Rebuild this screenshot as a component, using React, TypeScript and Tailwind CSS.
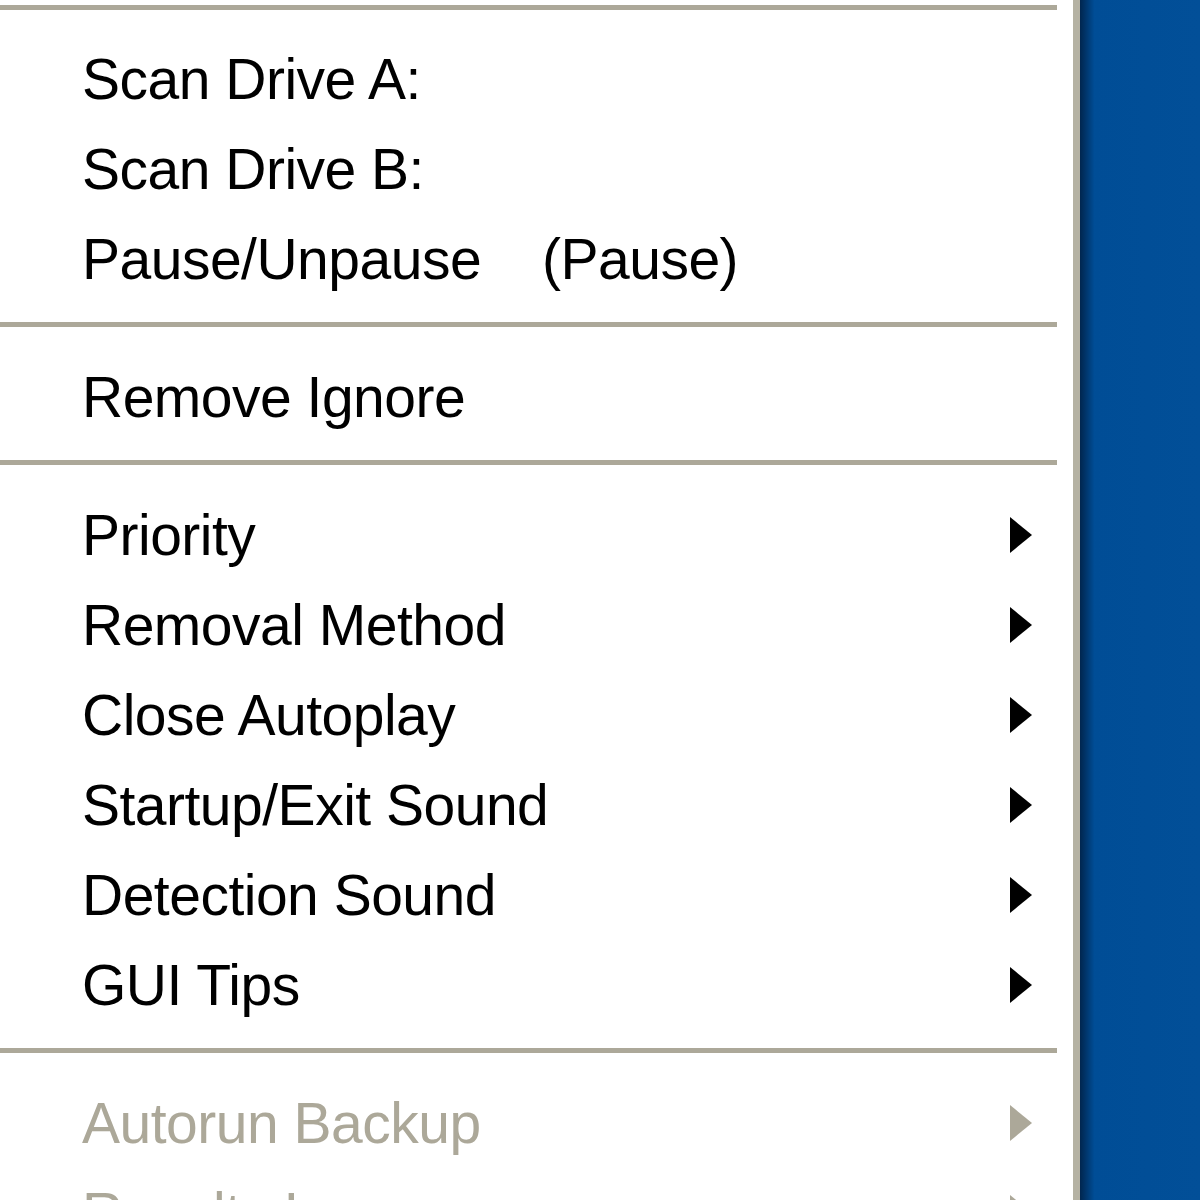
type Item =
  | { kind: 'sep' }
  | { kind: 'item'; label: string; accel?: string; sub?: boolean; disabled?: boolean }

const items: Item[] = [
  { kind: 'item', label: 'Scan Drive A:' },
  { kind: 'item', label: 'Scan Drive B:' },
  { kind: 'item', label: 'Pause/Unpause', accel: '(Pause)' },
  { kind: 'sep' },
  { kind: 'item', label: 'Remove Ignore' },
  { kind: 'sep' },
  { kind: 'item', label: 'Priority', sub: true },
  { kind: 'item', label: 'Removal Method', sub: true },
  { kind: 'item', label: 'Close Autoplay', sub: true },
  { kind: 'item', label: 'Startup/Exit Sound', sub: true },
  { kind: 'item', label: 'Detection Sound', sub: true },
  { kind: 'item', label: 'GUI Tips', sub: true },
  { kind: 'sep' },
  { kind: 'item', label: 'Autorun Backup', sub: true, disabled: true },
  { kind: 'item', label: 'Results Log', sub: true, disabled: true },
]

const Arrow = ({ disabled }: { disabled?: boolean }) => (
  <svg width="24" height="38" viewBox="0 0 24 38" className="absolute left-[1009px] top-1/2 -translate-y-1/2">
    <path d="M1 1 L23 19 L1 37 Z" fill={disabled ? '#aca899' : '#000'} />
  </svg>
)

const Separator = () => (
  <div className="h-[48px] pt-[18px]">
    <div className="h-[5px] w-[1057px] bg-[#aca899]" />
  </div>
)

const MenuRow = ({ label, accel, sub, disabled }: { label: string; accel?: string; sub?: boolean; disabled?: boolean }) => (
  <div className={`relative flex h-[90px] items-center pl-[82px] ${disabled ? 'text-[#aca899]' : 'text-black'}`}>
    <span className="w-[460px] whitespace-nowrap">{label}</span>
    {accel && <span className="whitespace-nowrap">{accel}</span>}
    {sub && <Arrow disabled={disabled} />}
  </div>
)

export default function App() {
  return (
    <div className="flex h-[1200px] w-[1200px] overflow-hidden bg-white font-['Liberation_Sans',Arial,sans-serif] text-[57px] leading-none tracking-[-0.5px]">
      {/* context menu, cut off on the left */}
      <div className="flex w-[1080px] shrink-0">
        <div className="w-[1073px] bg-white">
          <div className="h-[34px] pt-[5px]">
            <div className="h-[5px] w-[1057px] bg-[#aca899]" />
          </div>
          {items.map((it, i) =>
            it.kind === 'sep' ? (
              <Separator key={i} />
            ) : (
              <MenuRow key={i} label={it.label} accel={it.accel} sub={it.sub} disabled={it.disabled} />
            )
          )}
        </div>
        <div className="w-[7px] bg-[#b5b2a3]" />
      </div>
      {/* desktop behind */}
      <div className="flex-1 bg-gradient-to-r from-[#00264f] via-[#004d96] via-[12%] to-[#024f98]" />
    </div>
  )
}
